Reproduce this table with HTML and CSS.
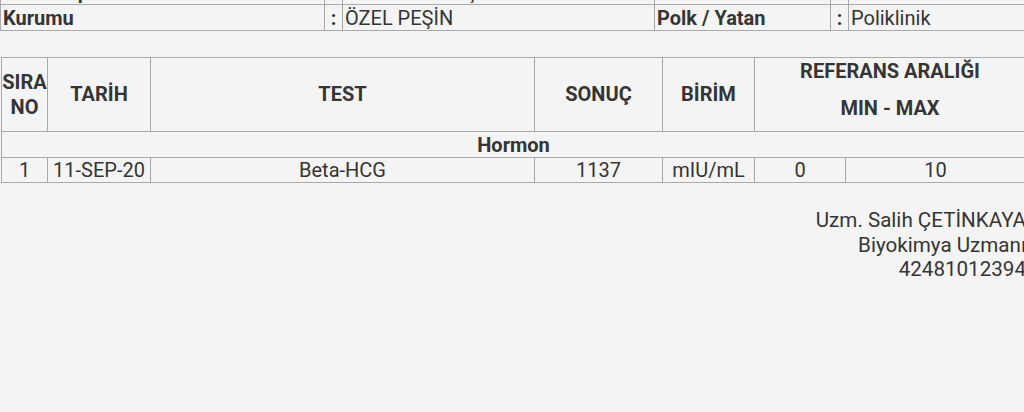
FILE: index.html
```html
<!DOCTYPE html>
<html lang="tr">
<head>
  <meta charset="UTF-8">
  <meta name="viewport" content="width=device-width, initial-scale=1.0">
  <title>Tahlil Sonucu</title>
  <link rel="stylesheet" href="styles.css">
</head>
<body>
  <table class="info">
    <colgroup>
      <col class="c-label">
      <col class="c-colon">
      <col class="c-value">
      <col class="c-label2">
      <col class="c-colon">
      <col class="c-value2">
    </colgroup>
    <tr>
      <td class="label">Hasta Tipi</td>
      <td class="colon">:</td>
      <td>GENEL MUAYŞ</td>
      <td class="label"></td>
      <td class="colon"></td>
      <td></td>
    </tr>
    <tr>
      <td class="label">Kurumu</td>
      <td class="colon">:</td>
      <td>ÖZEL PEŞİN</td>
      <td class="label">Polk / Yatan</td>
      <td class="colon">:</td>
      <td>Poliklinik</td>
    </tr>
  </table>

  <table class="results">
    <colgroup>
      <col class="c-no">
      <col class="c-date">
      <col class="c-test">
      <col class="c-result">
      <col class="c-unit">
      <col class="c-min">
      <col class="c-max">
    </colgroup>
    <thead>
      <tr>
        <th class="sira">SIRA<br>NO</th>
        <th>TARİH</th>
        <th>TEST</th>
        <th>SONUÇ</th>
        <th>BİRİM</th>
        <th colspan="2" class="ref">
          <div>REFERANS ARALIĞI</div>
          <div>MIN - MAX</div>
        </th>
      </tr>
    </thead>
    <tbody>
      <tr class="group">
        <td colspan="7">Hormon</td>
      </tr>
      <tr class="row">
        <td>1</td>
        <td>11-SEP-20</td>
        <td>Beta-HCG</td>
        <td>1137</td>
        <td>mIU/mL</td>
        <td>0</td>
        <td>10</td>
      </tr>
    </tbody>
  </table>

  <div class="signature">
    <div>Uzm. Salih ÇETİNKAYA</div>
    <div>Biyokimya Uzmanı</div>
    <div>42481012394</div>
  </div>
</body>
</html>
```

FILE: styles.css
```css
body {
  margin: 0;
  background: #f4f4f4;
  color: #353535;
  font-family: Roboto, "Liberation Sans", sans-serif;
  font-size: 20px;
  overflow: hidden;
}

table {
  border-collapse: collapse;
  table-layout: fixed;
}

td, th {
  border: 1px solid #a9a9a9;
  padding: 0;
  white-space: nowrap;
  overflow: hidden;
}

/* top info block */
.info {
  width: 1026px;
  margin-top: -22px;
}

.info tr {
  height: 26px;
}

.info td {
  padding: 0 2px;
  line-height: 24px;
}

.info .label {
  font-weight: bold;
}

.info .colon {
  text-align: center;
  font-weight: bold;
  padding: 0;
}

.c-label { width: 324px; }
.c-colon { width: 18px; }
.c-value { width: 312px; }
.c-label2 { width: 176px; }
.c-value2 { width: 178px; }

/* results */
.results {
  width: 1025px;
  margin: 26px 0 0 1px;
  text-align: center;
}

.c-no { width: 46px; }
.c-date { width: 103px; }
.c-test { width: 384px; }
.c-result { width: 128px; }
.c-unit { width: 92px; }
.c-min { width: 91px; }
.c-max { width: 180px; }

.results th {
  height: 72px;
  font-weight: bold;
  line-height: 25px;
}

.results th.ref {
  vertical-align: top;
  padding-top: 1px;
  line-height: 24px;
}

.ref div + div {
  margin-top: 13px;
}

.group td {
  height: 25px;
  font-weight: bold;
  line-height: 24px;
}

.row td {
  height: 24px;
  line-height: 24px;
}

.signature {
  margin: 25px -2px 0 0;
  font-size: 20.6px;
  text-align: right;
  line-height: 24.5px;
}
```
